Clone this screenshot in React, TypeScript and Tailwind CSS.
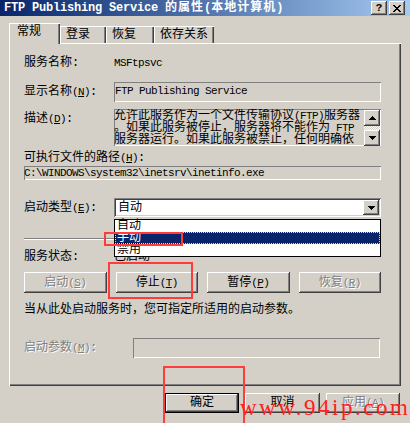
const raised = 'shadow-[inset_-1px_-1px_#404040,inset_1px_1px_#ffffff,inset_-2px_-2px_#808080]';
const sunken2 = 'shadow-[inset_1px_1px_#808080,inset_-1px_-1px_#ffffff,inset_2px_2px_#404040,inset_-2px_-2px_#d4d0c8]';
const sunken1 = 'shadow-[inset_1px_1px_#808080,inset_-1px_-1px_#ffffff]';
const disabledText = 'text-[#808080] [text-shadow:1px_1px_0_#ffffff]';

// latin run in the narrow "SimSun-like" width
const L = ({ children }: { children: React.ReactNode }) => (
  <span className="text-[11px] tracking-[-0.6px]">{children}</span>
);

const Mn = ({ k }: { k: string }) => (
  <L>
    (<u>{k}</u>)
  </L>
);

const Down = () => (
  <svg width="7" height="4" viewBox="0 0 7 4" shapeRendering="crispEdges">
    <polygon points="0,0 7,0 3.5,4" fill="#000" />
  </svg>
);

const Up = () => (
  <svg width="7" height="4" viewBox="0 0 7 4" shapeRendering="crispEdges">
    <polygon points="0,4 7,4 3.5,0" fill="#000" />
  </svg>
);

const Btn = ({ children, disabled, def, w }: { children: React.ReactNode; disabled?: boolean; def?: boolean; w?: string }) => (
  <div
    className={`${w ?? ''} h-full flex items-center justify-center bg-[#d4d0c8] ${
      def ? 'border border-black shadow-[inset_-1px_-1px_#404040,inset_1px_1px_#ffffff,inset_-2px_-2px_#808080]' : raised
    } ${disabled ? disabledText : ''}`}
  >
    {children}
  </div>
);

const tabs = [
  { name: '登录', w: 'w-[46px]' },
  { name: '恢复', w: 'w-[48px]' },
  { name: '依存关系', w: 'w-[60px]' },
];

export default function App() {
  return (
    <div className="relative w-[410px] h-[423px] overflow-hidden bg-[#d4d0c8] text-black text-[12px] leading-[12px] font-['Liberation_Mono','Noto_Sans_CJK_SC',monospace]">
      {/* title bar */}
      <div className="h-[16px] flex items-center pl-[4px] pr-[5px] bg-linear-to-r from-[#0a246a] to-[#a6caf0]">
        <div className="flex-1 text-white font-bold whitespace-nowrap">
          <span className="tracking-[-0.2px]">FTP Publishing Service </span>
          <span className="tracking-[1px]">的属性</span>
          (<span className="tracking-[1px]">本地计算机</span>)
        </div>
        <div className="flex gap-[2px]">
          <div className={`w-[16px] h-[14px] bg-[#d4d0c8] ${raised} flex items-center justify-center font-bold text-[11px]`}>?</div>
          <div className={`w-[16px] h-[14px] bg-[#d4d0c8] ${raised} flex items-center justify-center`}>
            <svg width="8" height="7" viewBox="0 0 8 7" shapeRendering="crispEdges">
              <path d="M0 0h2l2 2.5L6 0h2L5 3.5 8 7H6L4 4.5 2 7H0l3-3.5z" fill="#000" />
            </svg>
          </div>
        </div>
      </div>

      {/* tabs */}
      <div className="relative z-10 mt-[7px] ml-[9px] h-[20px] flex items-end">
        <div className="w-[51px] h-[21px] -mb-px bg-[#d4d0c8] pl-[8px] pt-[3px] shadow-[inset_1px_1px_#ffffff,inset_-1px_0_#404040,inset_-2px_0_#808080]">
          常规
        </div>
        {tabs.map((t) => (
          <div
            key={t.name}
            className={`${t.w} h-[17px] bg-[#d4d0c8] pl-[6px] pt-[3px] shadow-[inset_1px_1px_#ffffff,inset_-1px_0_#404040,inset_-2px_0_#808080]`}
          >
            {t.name}
          </div>
        ))}
      </div>

      {/* panel */}
      <div className="ml-[9px] w-[392px] h-[343px] pl-[15px] pr-[20px] pt-[11px] flex flex-col shadow-[inset_1px_1px_#ffffff,inset_-1px_-1px_#404040,inset_-2px_-2px_#808080]">
        <div className="h-[18px] flex items-center">
          <div className="w-[90px]">服务名称:</div>
          <L>MSFtpsvc</L>
        </div>

        <div className="mt-[10px] h-[20px] flex items-center">
          <div className="w-[90px]">
            显示名称<Mn k="N" />:
          </div>
          <div className={`flex-1 h-full pl-[1px] pt-[3px] ${sunken1}`}>
            <L>FTP Publishing Service</L>
          </div>
        </div>

        <div className="mt-[7px] h-[37px] flex">
          <div className="w-[90px] pt-[4px]">
            描述<Mn k="D" />:
          </div>
          <div className={`flex-1 h-full flex ${sunken1}`}>
            <div className="flex-1 overflow-hidden whitespace-nowrap leading-[12px] pt-[1px]">
              <div>
                允许此服务作为一个文件传输协议<L>(FTP)</L>服务器
              </div>
              <div>
                。如果此服务被停止，服务器将不能作为<L> FTP</L>
              </div>
              <div>服务器运行。如果此服务被禁止，任何明确依</div>
            </div>
            <div className="w-[16px] mr-px mt-px flex flex-col">
              <div className={`h-[16px] flex items-center justify-center bg-[#d4d0c8] ${raised}`}>
                <Up />
              </div>
              <div className="h-[4px] bg-[repeating-conic-gradient(#ffffff_0_25%,#d4d0c8_0_50%)] bg-size-[2px_2px]" />
              <div className={`h-[16px] flex items-center justify-center bg-[#d4d0c8] ${raised}`}>
                <Down />
              </div>
            </div>
          </div>
        </div>

        <div className="mt-[6px] h-[12px]">
          可执行文件的路径<Mn k="H" />:
        </div>
        <div className={`mt-[2px] h-[14px] leading-[14px] whitespace-nowrap ${sunken1}`}>
          <L>C:\WINDOWS\system32\inetsrv\inetinfo.exe</L>
        </div>

        <div className="mt-[18px] h-[19px] flex items-center">
          <div className="w-[90px]">
            启动类型<Mn k="E" />:
          </div>
          <div className={`relative flex-1 h-full bg-white p-[2px] flex ${sunken2}`}>
            <div className="flex-1 pl-[2px] pt-[2px]">自动</div>
            <div className={`w-[16px] flex items-center justify-center bg-[#d4d0c8] ${raised}`}>
              <Down />
            </div>
            <div className="absolute z-20 left-0 right-0 top-[21px] h-[38px] bg-white border border-black">
              <div className="h-[12px] pl-[2px]">自动</div>
              <div className="h-[12px] pl-[2px] bg-[#0a246a] text-white outline outline-dotted outline-[#e8dca0] -outline-offset-1">手动</div>
              <div className="h-[12px] pl-[2px]">禁用</div>
            </div>
          </div>
        </div>

        <div className="mt-[21px] h-[2px] border-t border-t-[#808080] border-b border-b-white" />

        <div className="mt-[11px] h-[12px] flex">
          <div className="w-[90px]">服务状态:</div>
          <div>已启动</div>
        </div>

        <div className="mt-[9px] h-[21px] grid grid-cols-4 gap-[9px]">
          <Btn disabled>
            启动<Mn k="S" />
          </Btn>
          <Btn>
            停止<Mn k="T" />
          </Btn>
          <Btn>
            暂停<Mn k="P" />
          </Btn>
          <Btn disabled>
            恢复<Mn k="R" />
          </Btn>
        </div>

        <div className="mt-[11px] h-[12px] whitespace-nowrap">当从此处启动服务时，您可指定所适用的启动参数。</div>

        <div className="mt-[22px] h-[20px] flex items-center">
          <div className={`w-[109px] ${disabledText}`}>
            启动参数<Mn k="M" />:
          </div>
          <div className={`flex-1 h-full mr-px ${sunken1}`} />
        </div>
      </div>

      {/* dialog buttons */}
      <div className="mt-[7px] h-[20px] flex justify-end gap-[6px] pr-[10px]">
        <Btn def w="w-[74px]">确定</Btn>
        <Btn w="w-[75px]">取消</Btn>
        <Btn disabled w="w-[74px]">
          应用<Mn k="A" />
        </Btn>
      </div>

      {/* red annotation boxes */}
      <div className="absolute left-[104px] top-[232px] w-[79px] h-[14px] border-2 border-[#ff3b3b] z-30" />
      <div className="absolute left-[108px] top-[262px] w-[85px] h-[37px] border-2 border-[#ff3b3b] z-30" />
      <div className="absolute left-[163px] top-[366px] w-[82px] h-[60px] border-2 border-[#ff3b3b] z-30" />

      {/* watermark */}
      <div className="absolute left-[240px] top-[396px] z-30 whitespace-nowrap font-['Liberation_Serif',serif] text-[23px] leading-[23px] tracking-[2.5px] text-[#ff2020]">
        www.94ip.com
      </div>
    </div>
  );
}
